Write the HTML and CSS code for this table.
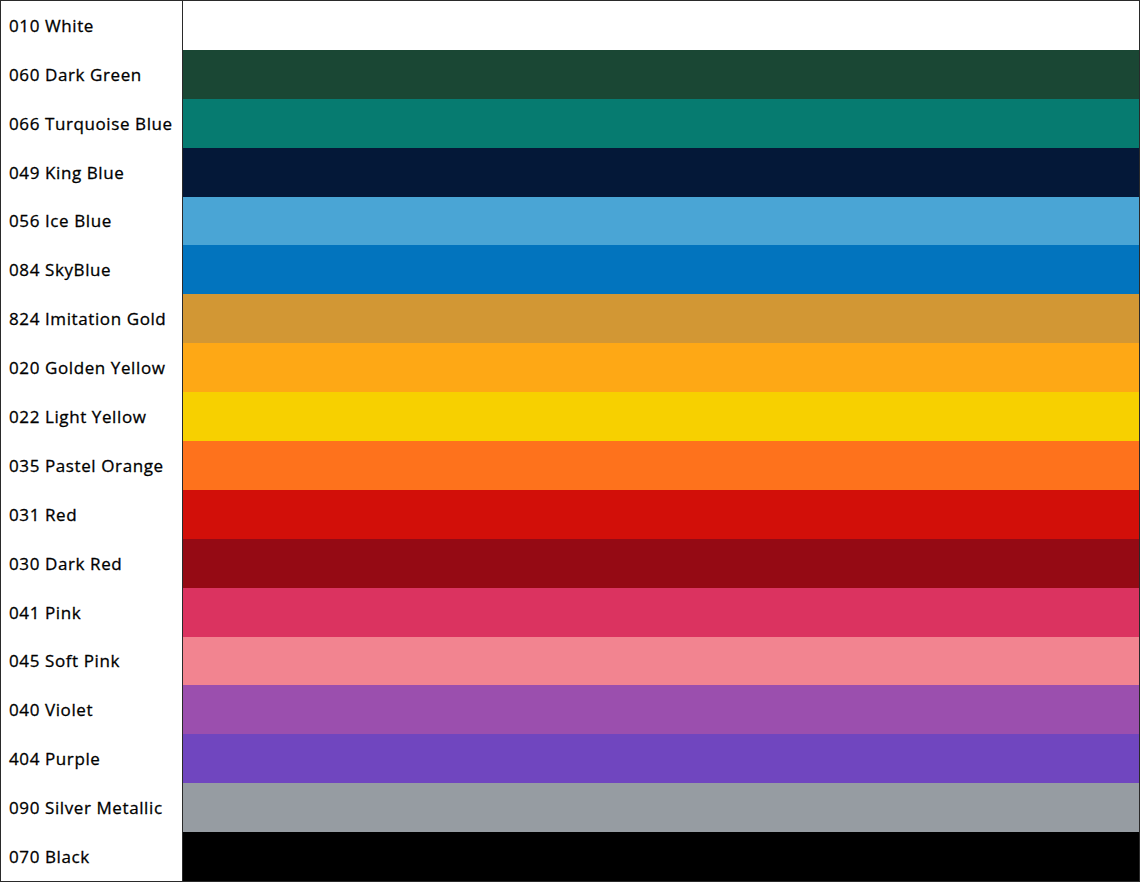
FILE: index.html
```html
<!DOCTYPE html>
<html>
<head>
<meta charset="utf-8">
<link rel="stylesheet" href="styles.css">
</head>
<body>
<div class="chart">
  <div class="row"><div class="name">010 White</div><div class="swatch" style="background:#ffffff"></div></div>
  <div class="row"><div class="name">060 Dark Green</div><div class="swatch" style="background:#1a4734"></div></div>
  <div class="row"><div class="name">066 Turquoise Blue</div><div class="swatch" style="background:#067b70"></div></div>
  <div class="row"><div class="name">049 King Blue</div><div class="swatch" style="background:#041838"></div></div>
  <div class="row"><div class="name">056 Ice Blue</div><div class="swatch" style="background:#4aa5d5"></div></div>
  <div class="row"><div class="name">084 SkyBlue</div><div class="swatch" style="background:#0274be"></div></div>
  <div class="row"><div class="name">824 Imitation Gold</div><div class="swatch" style="background:#d29734"></div></div>
  <div class="row"><div class="name">020 Golden Yellow</div><div class="swatch" style="background:#fea815"></div></div>
  <div class="row"><div class="name">022 Light Yellow</div><div class="swatch" style="background:#f7d000"></div></div>
  <div class="row"><div class="name">035 Pastel Orange</div><div class="swatch" style="background:#fe721c"></div></div>
  <div class="row"><div class="name">031 Red</div><div class="swatch" style="background:#d20f09"></div></div>
  <div class="row"><div class="name">030 Dark Red</div><div class="swatch" style="background:#950a14"></div></div>
  <div class="row"><div class="name">041 Pink</div><div class="swatch" style="background:#db3360"></div></div>
  <div class="row"><div class="name">045 Soft Pink</div><div class="swatch" style="background:#f28490"></div></div>
  <div class="row"><div class="name">040 Violet</div><div class="swatch" style="background:#9b4fae"></div></div>
  <div class="row"><div class="name">404 Purple</div><div class="swatch" style="background:#7046bf"></div></div>
  <div class="row"><div class="name">090 Silver Metallic</div><div class="swatch" style="background:#969ca2"></div></div>
  <div class="row"><div class="name">070 Black</div><div class="swatch" style="background:#000000"></div></div>
</div>
</body>
</html>
```
FILE: styles.css
```css
html, body {
  margin: 0;
  padding: 0;
  background: #ffffff;
}
.chart {
  box-sizing: border-box;
  width: 1140px;
  height: 882px;
  border: 1px solid #2a2a2a;
  display: grid;
  grid-template-rows: repeat(18, 1fr);
  font-family: "Open Sans", "Liberation Sans", sans-serif;
}
.row {
  display: grid;
  grid-template-columns: 182px 1fr;
}
.name {
  display: flex;
  align-items: center;
  padding: 0 0 0 8px;
  font-size: 17px;
  font-weight: 500;
  letter-spacing: 0.6px;
  color: #000000;
  -webkit-text-stroke: 0.3px #000000;
  border-right: 1px solid #2a2a2a;
  white-space: nowrap;
}
.swatch {
  height: 100%;
}
```
